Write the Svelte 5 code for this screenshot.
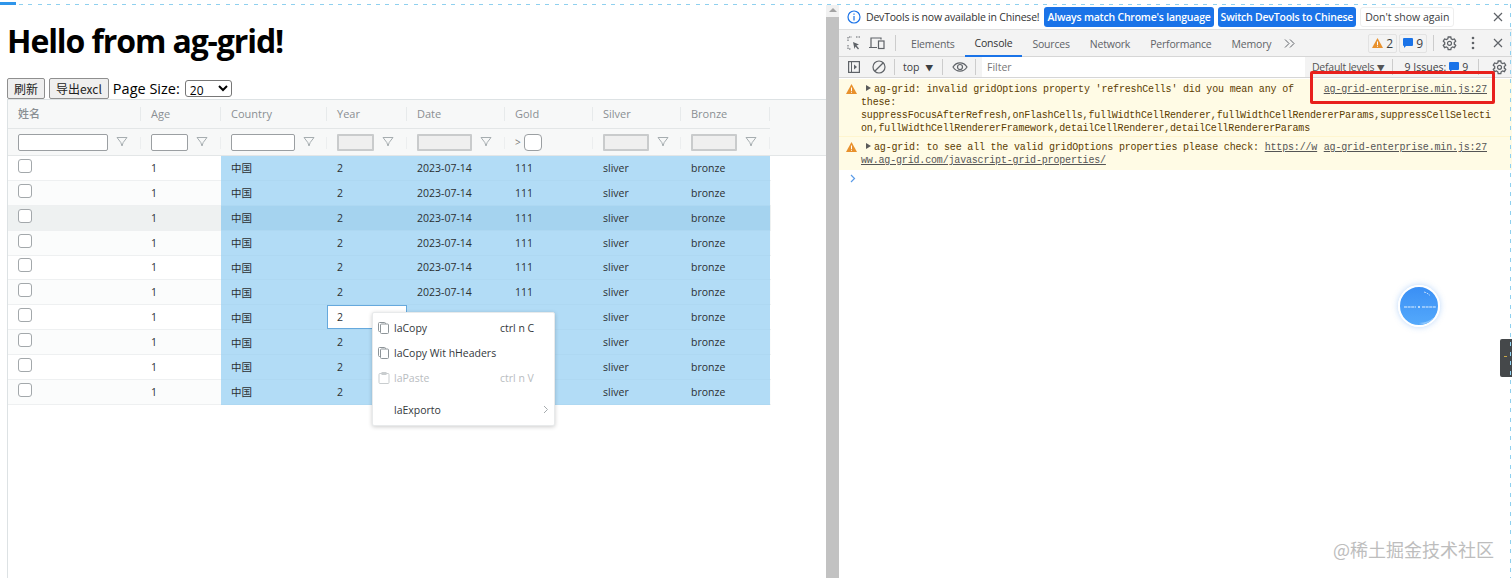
<script>
const columns = ['姓名', 'Age', 'Country', 'Year', 'Date', 'Gold', 'Silver', 'Bronze'];
const rows = [0, 1, 2, 3, 4, 5, 6, 7, 8, 9];
const tabs = ['Elements', 'Console', 'Sources', 'Network', 'Performance', 'Memory'];
const menu = [
  { label: 'laCopy', key: 'ctrl n C', icon: 'copy' },
  { label: 'laCopy Wit hHeaders', key: '', icon: 'copy' },
  { label: 'laPaste', key: 'ctrl n V', icon: 'paste', disabled: true },
  { label: 'laExporto', key: '', icon: '', more: true }
];
</script>

{#snippet funnel()}
  <svg class="funnel" width="12" height="12" viewBox="0 0 12 12"><path d="M1 1.5h10L7.2 6.5 6 10 4.800 6.5z" fill="none" stroke="#a6adb0" /></svg>
{/snippet}

{#snippet warn()}
  <svg class="warn" width="11" height="10" viewBox="0 0 11 10"><path d="M5.500 0L11 10H0z" fill="#e8912d" /><path d="M5 3.500h1V7H5zM5 7.800h1v1H5z" fill="#fff" /></svg>
{/snippet}

{#snippet msg()}
  <svg class="msg" width="10" height="10" viewBox="0 0 10 10"><path d="M0 1a1 1 0 0 1 1-1h8a1 1 0 0 1 1 1v6a1 1 0 0 1-1 1H3L1 10V8a1 1 0 0 1-1-1z" fill="#1a73e8" /></svg>
{/snippet}

{#snippet gear(size)}
  <svg width={size} height={size} viewBox="0 0 15 15"><path d="M6.200 1H8.800L9.200 2.800 10.600 3.600 12.400 3 13.700 5.200 12.300 6.500V8.100L13.700 9.400 12.400 11.600 10.600 11 9.200 11.800 8.800 13.600H6.200L5.800 11.800 4.400 11 2.600 11.600 1.300 9.400 2.700 8.100V6.500L1.300 5.200 2.600 3 4.400 3.600 5.800 2.800z" fill="none" stroke="#5f6368" stroke-width="1.300" /><circle cx="7.500" cy="7.300" r="2" fill="none" stroke="#5f6368" stroke-width="1.200" /></svg>
{/snippet}

<div class="page">
  <div class="topline"><span class="progress"></span></div>
  <div class="panes">
    <main class="left">
      <h1>Hello from ag-grid!</h1>
      <div class="controls">
        <button>刷新</button>
        <button>导出excl</button>
        <label for="page-size">Page Size:</label>
        <select id="page-size"><option>20</option></select>
      </div>

      <div class="grid">
        <div class="head">
          {#each columns as col}
            <div class="hcell">{col}</div>
          {/each}
          <div class="hfill"></div>
        </div>
        <div class="filters">
          <div class="fcell"><input class="w90" />{@render funnel()}</div>
          <div class="fcell"><input class="w37" />{@render funnel()}</div>
          <div class="fcell"><input class="w64" />{@render funnel()}</div>
          <div class="fcell"><span class="dis w37"></span>{@render funnel()}</div>
          <div class="fcell"><span class="dis w55"></span>{@render funnel()}</div>
          <div class="fcell"><span class="gt">&gt;</span><input class="w18" /></div>
          <div class="fcell"><span class="dis w46"></span>{@render funnel()}</div>
          <div class="fcell"><span class="dis w46"></span>{@render funnel()}</div>
        </div>
        <div class="body">
          {#each rows as r}
            <div class="row" class:odd={r % 2 === 1} class:hover={r === 2}>
              <div class="cell"><span class="check"></span></div>
              <div class="cell">1</div>
              <div class="cell sel cn">中国</div>
              <div class="cell sel" class:focus={r === 6}>2</div>
              <!-- the menu covers date and gold from row 6 down -->
              <div class="cell sel">{r < 6 ? '2023-07-14' : ''}</div>
              <div class="cell sel">{r < 6 ? '111' : ''}</div>
              <div class="cell sel">sliver</div>
              <div class="cell sel">bronze</div>
            </div>
          {/each}
        </div>

        <div class="menu">
          {#each menu as item}
            <div class="mitem" class:disabled={item.disabled} class:last={item.more}>
              <span class="micon">
                {#if item.icon === 'copy'}
                  <svg width="12" height="12" viewBox="0 0 12 12" fill="#fff" stroke="#8e9599"><rect x="0.5" y="0.5" width="7" height="9" rx="1" /><rect x="2.5" y="2" width="8" height="9.5" rx="1" /></svg>
                {:else if item.icon === 'paste'}
                  <svg width="12" height="12" viewBox="0 0 12 12" fill="none" stroke="#c9cdcf"><rect x="1" y="1.5" width="10" height="10" rx="1" /><rect x="4" y="0.5" width="4" height="2" fill="#c9cdcf" /></svg>
                {/if}
              </span>
              <span class="mlabel">{item.label}</span>
              <span class="mkey">{item.key}</span>
              {#if item.more}
                <svg class="mmore" width="6" height="9" viewBox="0 0 6 9"><path d="M1 1l3.500 3.500L1 8" fill="none" stroke="#a5abae" /></svg>
              {/if}
            </div>
          {/each}
        </div>
      </div>
    </main>

    <div class="scrollbar">
      <span class="arrow"></span>
      <span class="thumb"></span>
    </div>

    <section class="devtools">
      <div class="infobar">
        <svg width="14" height="14" viewBox="0 0 14 14"><circle cx="7" cy="7" r="6" fill="none" stroke="#1a73e8" stroke-width="1.200" /><path d="M6.400 6h1.200v4.500H6.400zM6.400 3.500h1.200v1.200H6.400z" fill="#1a73e8" /></svg>
        <span class="infotext">DevTools is now available in Chinese!</span>
        <span class="bluebtn">Always match Chrome's language</span>
        <span class="bluebtn">Switch DevTools to Chinese</span>
        <span class="whitebtn">Don't show again</span>
        <svg class="infoclose" width="10" height="10" viewBox="0 0 10 10"><path d="M1 1l8 8M9 1L1 9" stroke="#5f6368" stroke-width="1.200" /></svg>
      </div>

      <div class="tabbar">
        <svg class="ticon" width="14" height="14" viewBox="0 0 14 14"><path d="M1 5V1h4M9 1h4M1 9v4h3" fill="none" stroke="#5f6368" stroke-dasharray="1.500 1" /><path d="M6 6l6 2.500-2.500 1L12 12.500 11 13.500 8.500 10.500 7.500 13z" fill="#5f6368" /></svg>
        <svg class="ticon" width="16" height="13" viewBox="0 0 16 13"><path d="M2 10V1h10v1.500M0 10.500h8" fill="none" stroke="#5f6368" stroke-width="1.200" /><rect x="9.500" y="4" width="5.500" height="7.500" fill="none" stroke="#5f6368" stroke-width="1.200" /></svg>
        <span class="vsep tsep"></span>
        <div class="tabs">
          {#each tabs as tab}
            <span class="tab" class:active={tab === 'Console'}>{tab}</span>
          {/each}
          <svg class="chev" width="11" height="9" viewBox="0 0 11 9"><path d="M1 .5l4 4-4 4M6 .5l4 4-4 4" fill="none" stroke="#5f6368" /></svg>
        </div>
        <div class="badges">
          <span class="badge">{@render warn()} 2</span>
          <span class="badge">{@render msg()} 9</span>
          <span class="vsep"></span>
          <span class="bgear">{@render gear(15)}</span>
          <svg class="bdots" width="4" height="14" viewBox="0 0 4 14"><circle cx="2" cy="2" r="1.300" fill="#5f6368" /><circle cx="2" cy="7" r="1.300" fill="#5f6368" /><circle cx="2" cy="12" r="1.300" fill="#5f6368" /></svg>
          <svg class="bclose" width="10" height="10" viewBox="0 0 10 10"><path d="M1 1l8 8M9 1L1 9" stroke="#5f6368" stroke-width="1.200" /></svg>
        </div>
      </div>

      <div class="toolbar">
        <svg width="12" height="12" viewBox="0 0 12 12"><rect x="0.6" y="0.6" width="10.8" height="10.8" fill="none" stroke="#5f6368" stroke-width="1.200" /><path d="M3.500 1v10" stroke="#5f6368" /><path d="M6 3.500L9 6 6 8.500z" fill="#5f6368" /></svg>
        <svg class="noentry" width="14" height="14" viewBox="0 0 14 14"><circle cx="7" cy="7" r="6" fill="none" stroke="#5f6368" stroke-width="1.200" /><path d="M3 11l8-8" stroke="#5f6368" stroke-width="1.200" /></svg>
        <span class="vsep"></span>
        <span class="ctx">top <i>▼</i></span>
        <span class="vsep"></span>
        <svg class="eye" width="16" height="10" viewBox="0 0 16 10"><path d="M1 5c3.500-5.500 10.500-5.500 14 0-3.500 5.500-10.500 5.500-14 0z" fill="none" stroke="#5f6368" stroke-width="1.200" /><circle cx="8" cy="5" r="2.500" fill="none" stroke="#5f6368" stroke-width="1.200" /></svg>
        <span class="vsep"></span>
        <span class="filter">Filter</span>
        <span class="levels">Default levels <i>▼</i></span>
        <span class="vsep"></span>
        <span class="issues">9 Issues: {@render msg()} 9</span>
        <span class="vsep"></span>
        <span class="tgear">{@render gear(15)}</span>
      </div>

      <div class="console">
        <div class="message">
          {@render warn()}
          <div class="lines">
            <div class="line"><span><i class="tri"></i>ag-grid: invalid gridOptions property 'refreshCells' did you mean any of</span><u>ag-grid-enterprise.min.js:27</u></div>
            <div class="line">these:</div>
            <div class="line">suppressFocusAfterRefresh,onFlashCells,fullWidthCellRenderer,fullWidthCellRendererParams,suppressCellSelecti</div>
            <div class="line">on,fullWidthCellRendererFramework,detailCellRenderer,detailCellRendererParams</div>
          </div>
        </div>
        <div class="message second">
          {@render warn()}
          <div class="lines">
            <div class="line"><span><i class="tri"></i>ag-grid: to see all the valid gridOptions properties please check: <u>https://w</u></span><u>ag-grid-enterprise.min.js:27</u></div>
            <div class="line"><u>ww.ag-grid.com/javascript-grid-properties/</u></div>
          </div>
        </div>
        <svg class="prompt" width="6" height="9" viewBox="0 0 6 9"><path d="M1 1l3.500 3.500L1 8" fill="none" stroke="#5a9be8" stroke-width="1.200" /></svg>
      </div>
    </section>
  </div>

  <!-- things lying over the page: annotation box, floating ball, side tab, watermark -->
  <div class="redbox"></div>
  <div class="ball">
    <svg width="38" height="38" viewBox="0 0 38 38">
      <path d="M4 20h12M22 20h14" stroke="#e2f0ff" stroke-width="1" stroke-dasharray="3 .6" />
      <circle cx="19" cy="20" r="1" fill="#e2f0ff" />
      <path d="M24 5c2 .5 4 1.500 6 3.500" fill="none" stroke="#e2f0ff" stroke-width=".8" stroke-dasharray="2 1" />
      <path d="M19 36c6-.5 11-2 14-5l2 3-8 4z" fill="#8cc6fd" />
    </svg>
  </div>
  <div class="sidetab"><span></span></div>
  <div class="edge"></div>
  <div class="watermark">@稀土掘金技术社区</div>
</div>

<style>
:global(body) {
  margin: 0;
  background: #fff;
}

.page {
  position: relative;
  width: 1512px;
  height: 578px;
  overflow: hidden;
  font-family: "Open Sans", "Noto Sans CJK SC", sans-serif;
  color: #000;
}

.topline {
  height: 5px;
  position: relative;
  background: repeating-linear-gradient(90deg, #8fd0ef 0 4px, transparent 4px 9.4px) 0 4px / 100% 1px no-repeat;
}

.progress {
  position: absolute;
  left: 0;
  top: 2px;
  width: 16px;
  height: 3px;
  background: #2f95ea;
}

.panes {
  display: flex;
  height: 573px;
}

/* left page */
.left {
  width: 826px;
  flex: none;
  padding-left: 7px;
  box-sizing: border-box;
}

h1 {
  margin: 14px 0 0 0;
  font-size: 32px;
  line-height: 44px;
  font-weight: 700;
  letter-spacing: -1.1px;
}

.controls {
  display: flex;
  align-items: center;
  gap: 4px;
  margin-top: 15px;
  height: 21px;
}

.controls button {
  height: 21px;
  padding: 0 6px;
  border: 1px solid #8f8f8f;
  border-radius: 2px;
  background: #efefef;
  font: 12px "Noto Sans CJK SC", sans-serif;
  color: #222;
}

.controls label {
  font-size: 14.5px;
}

.controls select {
  width: 47px;
  height: 17px;
  margin-left: 1px;
  font: 12px/15px "Open Sans", sans-serif;
  background: #fff;
  border: 1px solid #777;
  border-radius: 3px;
  padding: 0;
}

.grid {
  position: relative;
  height: 479px;
  border-top: 1px solid #dde2e4;
  border-left: 1px solid #dde2e4;
  font-size: 10.5px;
  color: #2c3033;
}

.head, .filters, .row {
  display: grid;
  grid-template-columns: 133px 80px 106px 80px 98px 88px 88px 89px 1fr;
}

.head {
  height: 28px;
  background: #f7f8f8;
  align-items: center;
}

.hcell {
  padding-left: 10px;
  color: #8a8f93;
  font-size: 11px;
  font-weight: 500;
  border-right: 1px solid #e7eaeb;
  height: 14px;
  line-height: 14px;
}

.hfill {
  align-self: stretch;
}

.filters {
  height: 28px;
  box-sizing: border-box;
  background: #f7f8f8;
  border-bottom: 1px solid #e3e6e7;
}

.fcell {
  display: flex;
  align-items: center;
  padding-left: 10px;
  gap: 8px;
  position: relative;
  border-top: 1px solid #e3e6e7;
}

.fcell::after {
  content: "";
  position: absolute;
  right: 0;
  top: 8px;
  height: 12px;
  width: 1px;
  background: #eceeef;
}

.fcell input, .dis {
  box-sizing: border-box;
  height: 17px;
  padding: 0;
  background: #fff;
  border: 1px solid #9b9fa2;
  border-radius: 2px;
  outline: none;
  flex: none;
}

.fcell .dis {
  background: #efefef;
  border: 2px solid #c9cbcc;
  border-radius: 1px;
}

.w90 { width: 90px; }
.w37 { width: 37px; }
.w64 { width: 64px; }
.w55 { width: 55px; }
.w46 { width: 46px; }
.fcell .w18 {
  width: 18px;
  border-radius: 4px;
}

.fcell .gt {
  font-size: 10px;
  color: #777;
  margin-right: -5px;
}

.funnel {
  flex: none;
}

.row {
  height: 24.875px;
  box-sizing: border-box;
  background: #fff;
  border-bottom: 1px solid #eef0f1;
  width: 763px;
}

.row.odd {
  background: #fbfcfc;
}

.row.hover {
  background: #eef1f1;
}

.cell {
  display: flex;
  align-items: center;
  padding-left: 10px;
  min-width: 0;
}

.cell.cn {
  font-family: "Noto Sans CJK SC", sans-serif;
}

.row .sel {
  background: #b2dcf6;
  margin-bottom: -1px;
  border-bottom: 1px solid #aed8f2;
}

.row.hover .sel {
  background: #a5d3ef;
}

.row .sel.focus {
  background: #fff;
  box-shadow: inset 0 0 0 1px #66a9dd;
}

.check {
  width: 12px;
  height: 12px;
  border: 1px solid #a3a8ab;
  border-radius: 3px;
  background: #fff;
  margin-top: -4px;
}

/* context menu */
.menu {
  position: absolute;
  left: 364px;
  top: 212px;
  width: 183px;
  height: 114px;
  box-sizing: border-box;
  padding-top: 2px;
  background: #fff;
  border: 1px solid #e8eaeb;
  border-radius: 2px;
  box-shadow: 0 1px 4px rgba(0, 0, 0, 0.2);
  color: #33383b;
}

.mitem {
  display: flex;
  align-items: center;
  height: 25px;
  position: relative;
}

.mitem.last {
  margin-top: 7px;
}

.mitem.disabled {
  color: #b9bdbf;
}

.micon {
  width: 16px;
  padding-left: 5px;
  display: flex;
  flex: none;
}

.mlabel {
  width: 106px;
  flex: none;
  white-space: nowrap;
}

.mkey {
  white-space: nowrap;
}

.mmore {
  position: absolute;
  right: 5px;
  top: 8px;
}

/* page scrollbar */
.scrollbar {
  width: 13px;
  flex: none;
  background: #f1f1f1;
  display: flex;
  flex-direction: column;
  align-items: center;
}

.arrow {
  margin-top: 3px;
  width: 0;
  height: 0;
  border-left: 4px solid transparent;
  border-right: 4px solid transparent;
  border-bottom: 4px solid #a3a3a3;
}

.thumb {
  margin-top: 5px;
  flex: 1;
  width: 100%;
  background: #c2c2c2;
}

/* devtools */
.devtools {
  flex: 1;
  font-size: 10.5px;
  color: #3c4043;
  min-width: 0;
}

.infobar {
  display: flex;
  align-items: center;
  height: 25px;
  padding: 0 9px 0 8px;
  border-bottom: 1px solid #e0e0e0;
  box-sizing: border-box;
  gap: 4px;
}

.infotext {
  margin: 0 1px;
  white-space: nowrap;
  color: #333;
  letter-spacing: -0.2px;
}

.bluebtn, .whitebtn {
  height: 20px;
  line-height: 20px;
  padding: 0 3px;
  border-radius: 3px;
  background: #1a73e8;
  color: #fff;
  font-weight: 600;
  white-space: nowrap;
  letter-spacing: -0.22px;
}

.whitebtn {
  background: #fff;
  color: #3c4043;
  font-weight: 500;
  padding: 0 4px;
  border: 1px solid #eee;
  box-sizing: border-box;
  line-height: 18px;
  letter-spacing: 0;
}

.infoclose {
  margin-left: auto;
}

.tabbar {
  display: flex;
  align-items: center;
  height: 27px;
  background: #f3f3f3;
  border-bottom: 1px solid #d6d6d6;
  box-sizing: border-box;
  padding-left: 8px;
}

.ticon {
  margin-right: 8px;
}

.vsep {
  width: 1px;
  height: 16px;
  background: #ccc;
  flex: none;
}

.tsep {
  margin-left: 2px;
}

.tabs {
  display: flex;
  align-items: stretch;
  align-self: stretch;
  margin-left: 5px;
}

.tab {
  padding: 0 10px;
  color: #5f6368;
  display: flex;
  align-items: center;
  white-space: nowrap;
  margin-bottom: -1px;
  letter-spacing: -0.2px;
}

.tab.active {
  color: #333;
  border-bottom: 2px solid #1a73e8;
  box-sizing: border-box;
  padding-top: 1px;
}

.chev {
  align-self: center;
  margin-left: 3px;
}

.badges {
  margin-left: auto;
  display: flex;
  align-items: center;
  padding-right: 9px;
}

.badge {
  display: flex;
  align-items: center;
  gap: 3px;
  height: 17px;
  padding: 0 3px;
  border: 1px solid #e2e2e2;
  border-radius: 2px;
  font-size: 12px;
  margin-right: 2px;
}

.badge + .vsep {
  margin-left: 4px;
}

.bgear {
  display: flex;
  margin-left: 8px;
}

.bdots {
  margin-left: 14px;
}

.bclose {
  margin-left: 18px;
}

.msg {
  flex: none;
}

.toolbar {
  display: flex;
  align-items: center;
  height: 21px;
  background: #f3f3f3;
  border-bottom: 1px solid #d6d6d6;
  box-sizing: border-box;
  padding-left: 9px;
  gap: 7px;
}

.noentry {
  margin-left: 5px;
  margin-right: 1px;
}

.ctx {
  width: 32px;
  white-space: nowrap;
  margin-left: 1px;
}

.ctx i {
  font-style: normal;
  font-size: 8px;
  margin-left: 3px;
}

.levels i {
  font-style: normal;
  font-size: 8px;
}

.eye {
  margin-left: 2px;
}

.filter {
  flex: none;
  width: 323px;
  height: 20px;
  line-height: 20px;
  background: #fff;
  padding-left: 5px;
  box-sizing: border-box;
  color: #777;
  margin-left: -1px;
}

.levels {
  white-space: nowrap;
  color: #555;
  letter-spacing: -0.25px;
}

.issues {
  display: flex;
  gap: 3px;
  align-items: center;
  white-space: nowrap;
  margin-left: 5px;
}

.toolbar .issues + .vsep {
  margin-left: 3px;
}

.tgear {
  display: flex;
  margin-left: 6px;
}

.console {
  margin-top: 1px;
  font-family: "Liberation Mono", monospace;
  font-size: 10px;
  letter-spacing: -0.17px;
  color: #5c3c00;
}

.message {
  display: flex;
  background: #fffbe5;
  padding: 4px 8px 1px 7px;
  position: relative;
  border-bottom: 1px solid #fff5cf;
}

.message.second {
  padding-bottom: 3px;
  border-bottom: none;
}

.message > :global(.warn) {
  flex: none;
  margin-top: 1px;
  margin-right: 4px;
}

.lines {
  flex: 1;
  min-width: 0;
}

.line {
  height: 13px;
  line-height: 13px;
  white-space: pre;
  display: flex;
  justify-content: space-between;
  padding-right: 17px;
}

.line u {
  color: #555;
}

.tri {
  display: inline-block;
  width: 0;
  height: 0;
  margin: 0 3px 1px 5px;
  border-left: 5px solid #5a5a5a;
  border-top: 3px solid transparent;
  border-bottom: 3px solid transparent;
}

.prompt {
  display: block;
  margin: 4px 0 0 11px;
}

/* overlays */
.redbox {
  position: absolute;
  left: 1310px;
  top: 71px;
  width: 185px;
  height: 33px;
  box-sizing: border-box;
  border: 3px solid #e8201c;
  border-radius: 2px;
}

.ball {
  position: absolute;
  left: 1398px;
  top: 285px;
  width: 42px;
  height: 42px;
  box-sizing: border-box;
  border-radius: 50%;
  border: 2px solid #fff;
  overflow: hidden;
  background: linear-gradient(#3a8ff5, #54a9fb);
  box-shadow: 0 0 6px rgba(60, 140, 240, 0.35);
}

.ball svg {
  display: block;
}

.sidetab {
  position: absolute;
  left: 1500px;
  top: 339px;
  width: 12px;
  height: 38px;
  background: #45484a;
  border-radius: 2px 0 0 2px;
}

.sidetab span {
  position: absolute;
  left: 4px;
  top: 17px;
  width: 3px;
  height: 1px;
  background: #c9a94a;
}

.edge {
  position: absolute;
  left: 1510px;
  top: 4px;
  bottom: 0;
  width: 1px;
  background: repeating-linear-gradient(180deg, #8fd0ef 0 4px, transparent 4px 9.4px);
}

.watermark {
  position: absolute;
  right: 18px;
  top: 537px;
  font-family: "Noto Sans CJK SC", sans-serif;
  font-size: 18px;
  line-height: 24px;
  color: #bdbdbd;
  white-space: nowrap;
}
</style>
